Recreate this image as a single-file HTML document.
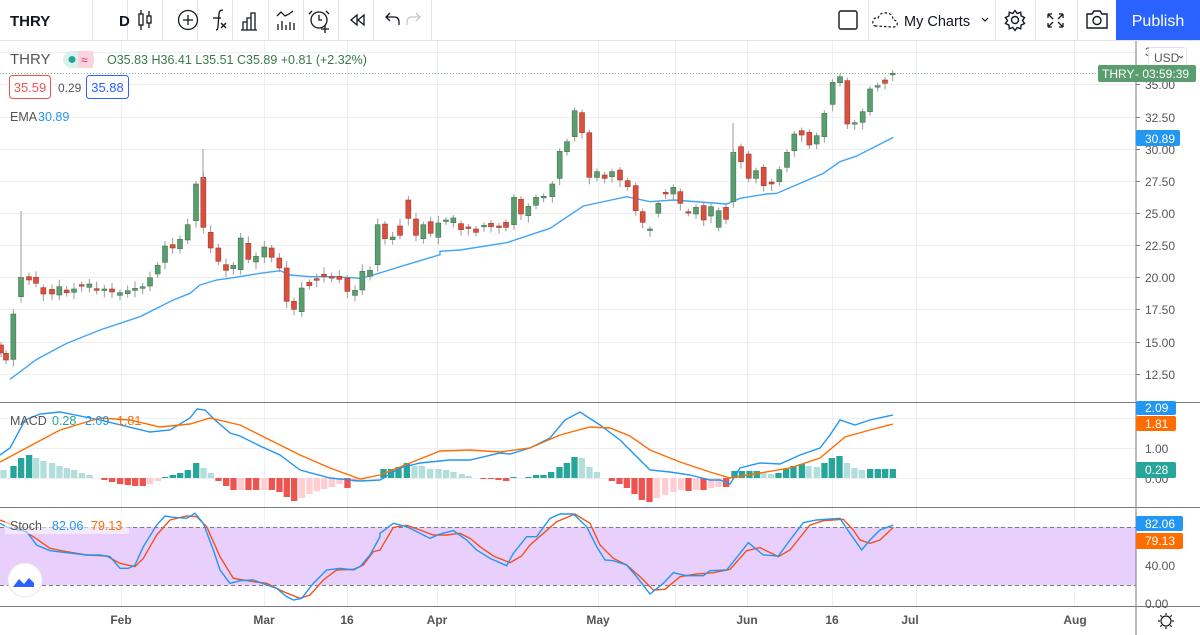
<!DOCTYPE html>
<html><head><meta charset="utf-8"><style>
body{margin:0;width:1200px;height:635px;overflow:hidden;background:#fff;font-family:"Liberation Sans",sans-serif;}
svg{position:absolute;left:0;top:0}
text{font-family:"Liberation Sans",sans-serif}
</style></head><body>
<svg id="s" width="1200" height="635" xmlns="http://www.w3.org/2000/svg">
<g id="grid" stroke="#eeeff2" stroke-width="1"></g>
<g id="chart"></g>
<!-- toolbar -->
<rect x="0" y="0" width="1200" height="40" fill="#fff"/>
<line x1="0" y1="40.5" x2="1200" y2="40.5" stroke="#e0e3eb"/>
<g stroke="#e0e3eb">
<line x1="92.5" y1="0" x2="92.5" y2="40"/><line x1="127.5" y1="0" x2="127.5" y2="40"/><line x1="162.5" y1="0" x2="162.5" y2="40"/><line x1="197.5" y1="0" x2="197.5" y2="40"/><line x1="232.5" y1="0" x2="232.5" y2="40"/><line x1="268.5" y1="0" x2="268.5" y2="40"/><line x1="303.5" y1="0" x2="303.5" y2="40"/><line x1="338.5" y1="0" x2="338.5" y2="40"/><line x1="373.5" y1="0" x2="373.5" y2="40"/><line x1="431.5" y1="0" x2="431.5" y2="40"/>
<line x1="868.5" y1="0" x2="868.5" y2="40"/><line x1="995.5" y1="0" x2="995.5" y2="40"/><line x1="1035.5" y1="0" x2="1035.5" y2="40"/><line x1="1077.5" y1="0" x2="1077.5" y2="40"/>
</g>
<text x="10" y="26" font-size="15" font-weight="bold" fill="#131722">THRY</text>
<text x="119" y="26" font-size="15" font-weight="bold" fill="#131722">D</text>
<g fill="none" stroke="#131722" stroke-width="1.3">
<rect x="139" y="14" width="4" height="11"/><line x1="141" y1="10" x2="141" y2="14"/><line x1="141" y1="25" x2="141" y2="30"/>
<rect x="147" y="16" width="4" height="7"/><line x1="149" y1="11" x2="149" y2="16"/><line x1="149" y1="23" x2="149" y2="28"/>
<circle cx="188" cy="20" r="9.5"/><line x1="188" y1="15" x2="188" y2="25"/><line x1="183" y1="20" x2="193" y2="20"/>
<path d="M216 30 Q218 30 218 26 L219 14 Q219 10 223 10"/><line x1="213" y1="18" x2="221" y2="18"/><path d="M221 23 l5 5 M226 23 l-5 5"/>
<path d="M243 30 V22 H247 V30 M247 30 V18 H251 V30 M251 30 V13 H255 V30 M241 30 H257"/>
<path d="M277 16 l4 -4 l4 4 l4 -2 l4 -3 M278 30 v-6 M282 30 v-9 M286 30 v-5 M290 30 v-8 M294 30 v-7"/>
<circle cx="319" cy="20" r="8"/><path d="M319 15 v5 h3 M312 11 l-3 3 M326 11 l3 3"/><path d="M325 25 v8 M321 29 h8"/>
<path d="M357 15 l-6 5 6 5 z M364 15 l-6 5 6 5 z"/>
<path d="M390 13 l-4 4 4 4 M386 17 h8 q5 0 5 5 v3"/>
</g>
<path d="M416 13 l4 4 -4 4 M420 17 h-8 q-5 0 -5 5 v3" fill="none" stroke="#c6c8ce" stroke-width="1.3"/>
<rect x="839" y="11" width="18" height="18" rx="2" fill="none" stroke="#131722" stroke-width="1.4"/>
<path d="M876 26 q-4 0 -3 -5 q1 -4 5 -3 q2 -6 9 -5 q6 1 6 7 q5 0 4 5 q-1 2 -4 2 z" fill="none" stroke="#131722" stroke-width="1.2" stroke-dasharray="2.5 2"/>
<text x="904" y="26" font-size="14.5" fill="#131722">My Charts</text>
<path d="M982 18 l3 3 3 -3" fill="none" stroke="#131722" stroke-width="1.2"/>
<g transform="translate(1015 20)" fill="none" stroke="#131722" stroke-width="1.4"><circle r="3.5"/><path d="M0 -9.5 l2.2 3 3.5 -1.3 0.4 3.7 3.4 1.6 -2 3 2 3 -3.4 1.6 -0.4 3.7 -3.5 -1.3 -2.2 3 -2.2 -3 -3.5 1.3 -0.4 -3.7 -3.4 -1.6 2 -3 -2 -3 3.4 -1.6 0.4 -3.7 3.5 1.3 z"/></g>
<path d="M1048 14 l5 5 M1048 14 h4 M1048 14 v4 M1063 14 l-5 5 M1063 14 h-4 M1063 14 v4 M1048 27 l5 -5 M1048 27 h4 M1048 27 v-4 M1063 27 l-5 -5 M1063 27 h-4 M1063 27 v-4" fill="none" stroke="#131722" stroke-width="1.3"/>
<path d="M1087 14 h5 l2 -3 h6 l2 3 h5 v14 h-20 z" fill="none" stroke="#131722" stroke-width="1.4"/><circle cx="1097" cy="20.5" r="4" fill="none" stroke="#131722" stroke-width="1.4"/>
<rect x="1116" y="0" width="84" height="40" fill="#2962ff"/>
<text x="1158" y="26" font-size="16" fill="#fff" text-anchor="middle">Publish</text>
<!-- legend -->
<text x="10" y="64" font-size="15" fill="#555">THRY</text>
<rect x="63" y="51" width="30" height="17" rx="8.5" fill="#d9f0ec"/><rect x="78" y="51" width="15" height="17" rx="0" fill="#fbd3dd"/><rect x="84" y="51" width="10" height="17" rx="8" fill="#fbd3dd"/>
<circle cx="72" cy="59.5" r="3.5" fill="#26a69a"/><text x="81" y="64" font-size="12" fill="#e91e63">≈</text>
<text x="107" y="64" font-size="12.5" fill="#3b7a47">O35.83 H36.41 L35.51 C35.89 +0.81 (+2.32%)</text>
<rect x="9.5" y="75.5" width="41" height="23" rx="3" fill="#fff" stroke="#ef5350"/><text x="30" y="92" font-size="13" fill="#ef5350" text-anchor="middle">35.59</text>
<text x="58" y="92" font-size="12" fill="#555">0.29</text>
<rect x="86.5" y="75.5" width="42" height="23" rx="3" fill="#fff" stroke="#2962ff"/><text x="107.5" y="92" font-size="13" fill="#2962ff" text-anchor="middle">35.88</text>
<text x="10" y="121" font-size="12.5" fill="#555">EMA</text><text x="38" y="121" font-size="12.5" fill="#2196f3">30.89</text>
<text x="10" y="425" font-size="12.5" fill="#555">MACD</text><text x="52" y="425" font-size="12.5" fill="#26a69a">0.28</text><text x="85" y="425" font-size="12.5" fill="#2196f3">2.09</text><text x="117" y="425" font-size="12.5" fill="#ff6d00">1.81</text>
<rect x="5" y="514" width="124" height="20" fill="#fff" opacity="0.55"/>
<text x="10" y="530" font-size="12.5" fill="#555">Stoch</text><text x="52" y="530" font-size="12.5" fill="#2196f3">82.06</text><text x="91" y="530" font-size="12.5" fill="#ff6d00">79.13</text>
<circle cx="25" cy="580" r="17" fill="#fff" stroke="#e6e6ea"/><path d="M13 587 l6 -8 5 5 5 -6 5 5 v4 h-21 z" fill="#2962ff"/><path d="M13 583 l6 -8 5 5 5 -6 6 6" fill="none" stroke="#fff" stroke-width="1.5"/>
<!-- axis -->
<rect x="1136" y="41" width="64" height="594" fill="#fff"/>
<g stroke="#787b86"><line x1="1136" y1="41" x2="1136" y2="635"/><line x1="0" y1="402.5" x2="1200" y2="402.5"/><line x1="0" y1="507.5" x2="1200" y2="507.5"/><line x1="0" y1="606.5" x2="1200" y2="606.5"/></g>
<g id="axis" font-size="12" fill="#555"></g>
<rect x="1148.5" y="47.5" width="38" height="20" rx="3" fill="#fff" stroke="#e0e3eb"/><text x="1154" y="62" font-size="12" fill="#555">USD</text><path d="M1179 56 l2 2 2 -2" fill="none" stroke="#555"/>
<line x1="0" y1="73.5" x2="1136" y2="73.5" stroke="#5a9e6f" stroke-dasharray="1 2" opacity="0.7"/>
<rect x="1098" y="65" width="98" height="17" rx="2" fill="#5a9e6f"/><text x="1102" y="78" font-size="12" fill="#fff">THRY</text><text x="1135" y="78" font-size="12" fill="#fff">- 03:59:39</text>
<rect x="1136" y="130" width="44" height="16" rx="2" fill="#2196f3"/><text x="1145" y="143" font-size="12" fill="#fff">30.89</text>
<rect x="1136" y="401" width="40" height="14" rx="2" fill="#2196f3"/><text x="1145" y="412" font-size="12" fill="#fff">2.09</text>
<rect x="1136" y="416" width="40" height="15" rx="2" fill="#ff6d00"/><text x="1145" y="428" font-size="12" fill="#fff">1.81</text>
<text x="1145" y="453" font-size="12" fill="#555">1.00</text>
<text x="1145" y="483" font-size="12" fill="#555">0.00</text>
<rect x="1136" y="462" width="40" height="16" rx="2" fill="#26a69a"/><text x="1145" y="474" font-size="12" fill="#fff">0.28</text>
<rect x="1136" y="516" width="47" height="15" rx="2" fill="#2196f3"/><text x="1145" y="528" font-size="12" fill="#fff">82.06</text>
<rect x="1136" y="533" width="47" height="16" rx="2" fill="#ff6d00"/><text x="1145" y="545" font-size="12" fill="#fff">79.13</text>
<text x="1145" y="570" font-size="12" fill="#555">40.00</text>
<text x="1145" y="608" font-size="12" fill="#555">0.00</text>
<g font-size="12" fill="#555" text-anchor="middle" font-weight="bold">
<text x="121" y="624">Feb</text><text x="264" y="624">Mar</text><text x="347" y="624">16</text><text x="437" y="624">Apr</text><text x="598" y="624">May</text><text x="747" y="624">Jun</text><text x="832" y="624">16</text><text x="910" y="624">Jul</text><text x="1075" y="624">Aug</text>
</g>
<g transform="translate(1166 621)" fill="none" stroke="#131722" stroke-width="1.2"><circle r="5"/><path d="M0 -8 v2 M0 6 v2 M-8 0 h2 M6 0 h2 M-5.7 -5.7 l1.4 1.4 M4.3 4.3 l1.4 1.4 M5.7 -5.7 l-1.4 1.4 M-4.3 4.3 l-1.4 1.4"/></g>
</svg>
<script>
var NS="http://www.w3.org/2000/svg";
function el(p,t,a){var e=document.createElementNS(NS,t);for(var k in a)e.setAttribute(k,a[k]);p.appendChild(e);return e;}
var g=document.getElementById('grid'),c=document.getElementById('chart'),ax=document.getElementById('axis');
[52,84,117,149,181,213,245,277,309,342,374,418,448,478,527,565,585].forEach(function(y){el(g,'line',{x1:0,x2:1136,y1:y+.5,y2:y+.5});});
[121,264,347,437,515,598,675,747,832,916,1074].forEach(function(x){el(g,'line',{x1:x+.5,x2:x+.5,y1:41,y2:606});});
var labs=[[84,'35.00'],[117,'32.50'],[149,'30.00'],[181,'27.50'],[213,'25.00'],[245,'22.50'],[277,'20.00'],[309,'17.50'],[342,'15.00'],[374,'12.50']];
labs.forEach(function(l){el(ax,'line',{x1:1136,x2:1140,y1:l[0]+.5,y2:l[0]+.5,stroke:'#787b86'});var t=el(ax,'text',{x:1145,y:l[0]+5});t.textContent=l[1];});
var t0=el(ax,'text',{x:1145,y:56});t0.textContent='3';
el(c,'rect',{x:0,y:527,width:1136,height:58,fill:'#e8cffc'});
el(c,'line',{x1:0,x2:1136,y1:527.5,y2:527.5,stroke:'#787b86','stroke-dasharray':'4 3'});
el(c,'line',{x1:0,x2:1136,y1:585.5,y2:585.5,stroke:'#787b86','stroke-dasharray':'4 3'});
var z4=[[18,640,660,'r'],[40,522,658,'g'],[63,412,470,'g'],[87,410,420,'r'],[108,412,430,'r'],[130,443,462,'r'],[156,448,462,'r'],[178,440,465,'g'],[200,450,458,'r'],[222,447,457,'g'],[245,434,437,'r'],[268,432,442,'g'],[290,446,451,'r'],[313,447,451,'g'],[336,447,456,'r'],[360,458,466,'g'],[383,452,461,'g'],[405,445,451,'g'],[428,440,445,'g'],[450,413,438,'g'],[473,376,402,'g'],[495,318,367,'g'],[518,314,324,'r'],[540,298,326,'g'],[563,254,300,'g'],[588,132,242,'g'],[610,112,262,'r'],[632,277,324,'r'],[655,324,364,'r'],[678,374,391,'r'],[700,376,386,'g'],[722,294,389,'g'],[745,310,358,'r'],[768,349,366,'g'],[793,321,351,'g'],[815,324,352,'r'],[838,354,384,'r'],[860,384,484,'r'],[882,484,508,'r'],[905,444,515,'g'],[928,427,437,'r'],[950,416,421,'r'],[972,403,410,'r'],[995,410,412,'r'],[1018,409,418,'r'],[1042,414,454,'r'],[1065,451,466,'g'],[1087,394,450,'g'],[1110,391,409,'g'],[1133,254,374,'g'],[1155,252,296,'r'],[1178,291,299,'g'],[1200,258,286,'r'],[1225,180,235,'r'],[1248,237,286,'r'],[1270,254,296,'g'],[1292,245,280,'r'],[1315,249,292,'g']];
var z5=[[18,510,513,'g'],[40,504,518,'g'],[63,521,539,'r'],[85,531,535,'r'],[108,537,547,'r'],[132,526,530,'g'],[153,520,530,'r'],[177,528,530,'r'],[198,517,532,'r'],[222,442,524,'g'],[243,448,492,'r'],[265,469,497,'g'],[288,442,466,'g'],[311,439,442,'g'],[337,402,440,'g'],[359,304,385,'g'],[381,275,305,'g'],[404,182,260,'g'],[426,188,248,'r'],[448,248,382,'r'],[471,365,382,'g'],[494,375,385,'r'],[516,365,380,'g'],[540,360,390,'r'],[563,392,410,'r'],[587,407,482,'r'],[608,485,517,'r'],[630,537,540,'g'],[655,460,490,'g'],[677,427,432,'r'],[700,412,432,'g'],[721,425,460,'r'],[745,485,487,'r'],[768,472,492,'g'],[791,467,510,'r'],[813,470,498,'g'],[836,482,532,'g'],[858,472,508,'r'],[880,307,455,'g'],[903,290,335,'r'],[926,312,385,'r'],[948,362,385,'g'],[971,352,407,'r'],[995,396,402,'r'],[1018,359,395,'g'],[1041,307,352,'g'],[1063,252,302,'g'],[1085,242,255,'r'],[1108,247,285,'r'],[1130,257,282,'g'],[1153,190,260,'g'],[1178,97,163,'g'],[1200,80,98,'g'],[1222,92,222,'r'],[1244,218,221,'g'],[1268,185,217,'g'],[1290,117,185,'g'],[1313,107,110,'g'],[1335,90,100,'r'],[1358,70,72,'g']];
function candle(x,y1,y2,k,extra){
  var col=k=='g'?'#5a9e6f':'#d9503e',st=k=='g'?'#3f7a52':'#a83a2b';
  var wt=y1-3-(extra||0)%5,wb=y2+4+(extra||0)%4;
  el(c,'line',{x1:x,x2:x,y1:wt,y2:wb,stroke:'#999','stroke-width':1});
  el(c,'rect',{x:x-2.5,y:y1,width:5,height:Math.max(1.5,y2-y1),fill:col,stroke:st,'stroke-width':.6});
}
el(c,'polyline',{fill:'none',stroke:'#42a5f5','stroke-width':1.4,points:
[[30,718],[110,658],[200,610],[300,570],[420,530],[520,480],[570,460],[600,435],[650,420],[700,413],[780,400],[840,392],[870,405],[930,410],[1000,410],[1080,415],[1110,408],[1200,380],[1320,344]].map(function(p){return (p[0]/3)+','+(140+p[1]/3);}).join(' ')+' '+
[[0,604],[60,600],[200,578],[330,535],[430,468],[560,440],[630,455],[700,450],[860,462],[900,445],[980,432],[1010,430],[1150,370],[1200,335],[1250,318],[1360,262]].map(function(p){return (440+p[0]/3)+','+(50+p[1]/3);}).join(' ')});
candle(1,345,353,'r',0);
z4.forEach(function(d,i){candle(d[0]/3,140+d[1]/3,140+d[2]/3,d[3],i*7);});
z5.forEach(function(d,i){candle(440+d[0]/3,50+d[1]/3,50+d[2]/3,d[3],i*5);});
el(c,'line',{x1:21,x2:21,y1:211,y2:280,stroke:'#999'});
el(c,'line',{x1:203,x2:203,y1:149,y2:180,stroke:'#999'});
el(c,'line',{x1:733,x2:733,y1:123,y2:155,stroke:'#999'});
function bars(arr,ox){arr.forEach(function(b){var x=ox+b[0]/3,h=b[1]/3;var col=h>=0?(b[2]?'#b2dfdb':'#26a69a'):(b[2]?'#ffcdd2':'#ef5350');el(c,'rect',{x:x-3,y:h>=0?478-h:478,width:6.3,height:Math.abs(h),fill:col});});}
bars([[10,8*3,1],[40,36],[63,60],[87,69],[108,60,1],[130,51,1],[156,45,1],[178,36,1],[200,30,1],[222,24,1],[245,15,1],[268,9,1],[313,-6],[336,-12],[360,-18],[383,-21],[405,-24],[428,-24],[450,-18,1],[473,-9,1],[495,3],[518,9],[540,15],[563,24],[588,45],[610,30,1],[632,15,1],[655,-9],[678,-24],[700,-36],[722,-36,1],[745,-36],[768,-36],[793,-36,1],[815,-36],[838,-42],[860,-57],[882,-69],[905,-60,1],[928,-48,1],[950,-39,1],[972,-33,1],[995,-27,1],[1018,-18,1],[1042,-30],[1065,-12,1],[1087,-6,1]],0);
bars([[10,27],[33,27],[55,33],[80,45],[103,36,1],[125,36,1],[150,27,1],[175,27,1],[198,24,1],[220,18,1],[245,12,1],[265,6,1],[310,-3],[333,-3],[355,-6],[378,-9],[400,3],[445,3],[468,9],[490,9],[513,18],[538,33],[560,45],[583,63],[605,60,1],[628,33,1],[650,18,1],[695,-9],[718,-18],[740,-30],[763,-48],[785,-66],[808,-72],[830,-60,1],[855,-51,1],[880,-42,1],[903,-36,1],[925,-39],[948,-36,1],[970,-36],[993,-30,1],[1015,-27,1],[1038,-27],[1063,21],[1085,21],[1108,21],[1130,21],[1150,15,1],[1173,12,1],[1195,15],[1218,27],[1240,36],[1265,42],[1285,36,1],[1310,33,1],[1333,45],[1355,60],[1378,66],[1400,45,1],[1423,30,1],[1445,24,1],[1470,27],[1493,27],[1515,27],[1538,27]],380);
function pl(pts,col){el(c,'polyline',{fill:'none',stroke:col,'stroke-width':1.4,points:pts.map(function(p){return p.join(',');}).join(' ')});}
pl([[0,455],[10,448],[25,420],[40,414],[60,412],[100,420],[150,432],[170,430],[190,418],[197,409],[205,410],[215,420],[230,433],[240,436],[260,446],[280,455],[300,470],[330,478],[360,481],[380,480],[400,468],[420,463],[450,460],[470,460],[500,453],[510,454],[530,448],[550,438],[565,420],[580,412],[600,425],[620,440],[640,460],[650,470],[670,472],[690,475],[710,480],[720,480],[730,484],[740,468],[760,463],[780,464],[800,455],[820,448],[830,435],[840,420],[855,425],[870,420],[893,415]],'#2196f3');
pl([[0,462],[30,446],[60,430],[100,418],[130,420],[160,427],[190,424],[210,418],[240,425],[270,440],[300,455],[330,468],[360,479],[380,475],[410,463],[440,451],[470,450],[500,452],[530,448],[560,435],[590,427],[610,428],[630,436],[650,450],[680,462],[710,472],[730,478],[760,473],[790,468],[820,458],[845,437],[870,430],[893,424]],'#ff6d00');
function cv(a,ox){return a.map(function(p){return [ox+p[0]/3,400+p[1]/3];});}
var kA=cv([[0,370],[30,385],[80,395],[110,435],[150,452],[200,458],[260,465],[300,465],[330,470],[360,505],[385,505],[405,495],[430,440],[470,375],[495,348],[520,352],[560,355],[585,340],[610,370],[640,450],[660,510],[690,550],[720,542],[760,540],[800,555],[830,565],[860,590],[880,600],[905,595],[940,550],[980,510],[1020,505],[1060,510],[1080,500],[1110,465],[1140,410]],0);
var kB=cv([[0,400],[40,370],[80,380],[110,395],[150,415],[180,402],[220,392],[260,420],[290,450],[330,475],[380,497],[400,460],[440,410],[470,410],[510,355],[540,342],[580,342],[620,380],[650,440],[675,480],[700,482],[740,495],[770,530],[810,582],[850,550],[880,518],[920,527],[970,527],[990,512],[1040,510],[1080,460],[1105,428],[1150,465],[1195,468],[1230,420],[1270,368],[1310,360],[1380,355],[1410,400],[1445,450],[1470,420],[1500,390],[1540,375]],380);
var dA=cv([[0,360],[50,380],[100,410],[150,445],[200,455],[260,465],[320,468],[360,490],[405,500],[430,475],[470,405],[510,360],[560,348],[590,350],[620,380],[660,470],[700,535],[760,545],[800,550],[850,575],[900,595],[930,585],[970,540],[1010,510],[1060,508],[1090,495],[1120,455]],0);
var dB=cv([[0,450],[40,382],[80,376],[120,390],[160,405],[200,405],[240,400],[270,415],[300,440],[340,468],[390,488],[425,468],[450,435],[490,400],[530,365],[585,342],[630,370],[660,435],[700,475],[740,495],[780,530],[820,570],[855,568],[900,530],[950,522],[1000,518],[1050,508],[1100,452],[1140,443],[1195,470],[1230,450],[1290,375],[1330,362],[1390,358],[1420,390],[1440,420],[1470,430],[1500,420],[1540,382]],380);
pl(dA.concat(dB),'#f4511e');pl(kA.concat(kB),'#2196f3');
</script>
</body></html>
